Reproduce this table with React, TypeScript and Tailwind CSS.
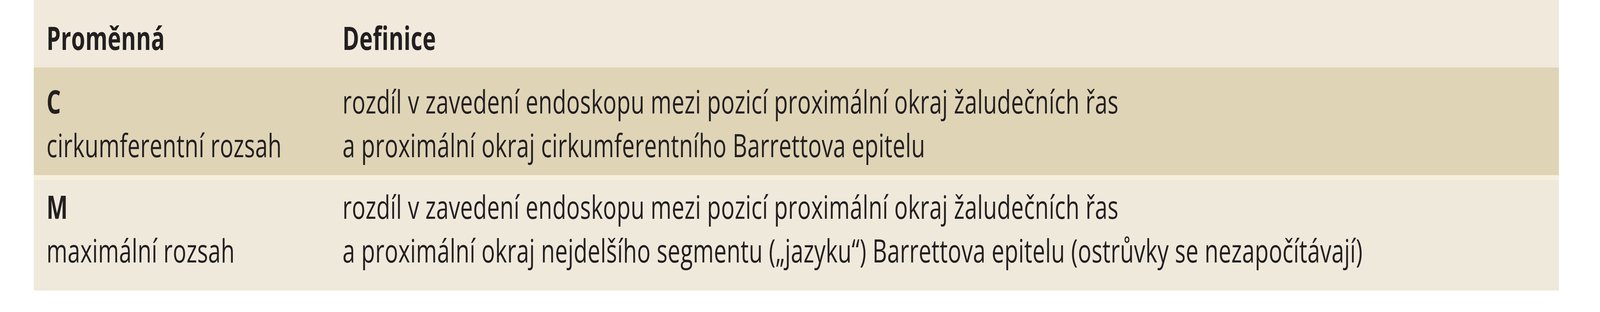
import { useEffect, useState } from "react";

// the reference is laid out on a 5881px wide sheet; fit it to whatever width the window really has
const SHEET_WIDTH = 5881;

const rows = [
  {
    code: "C",
    name: "cirkumferentní rozsah",
    bg: "bg-[#dfd4b6]",
    pad: "pt-[30px] pb-[22px]",
    lines: [
      "rozdíl v zavedení endoskopu mezi pozicí proximální okraj žaludečních řas",
      "a proximální okraj cirkumferentního Barrettova epitelu",
    ],
  },
  {
    code: "M",
    name: "maximální rozsah",
    bg: "bg-[#efe9dc]",
    pad: "pt-[11px] pb-[48px]",
    lines: [
      "rozdíl v zavedení endoskopu mezi pozicí proximální okraj žaludečních řas",
      "a proximální okraj nejdelšího segmentu („jazyku“) Barrettova epitelu (ostrůvky se nezapočítávají)",
    ],
  },
];

export default function App() {
  const [scale, setScale] = useState(() =>
    typeof window === "undefined" ? 1 : Math.min(1, window.innerWidth / SHEET_WIDTH)
  );

  useEffect(() => {
    const onResize = () => setScale(Math.min(1, window.innerWidth / SHEET_WIDTH));
    window.addEventListener("resize", onResize);
    return () => window.removeEventListener("resize", onResize);
  }, []);

  return (
    <div className="min-h-[800px] w-screen overflow-hidden bg-white">
      <div className="w-[5881px] origin-top-left" style={{ transform: `scaleX(${scale})` }}>
        <div
          className="ml-[124px] w-[5606px] text-[83px] leading-[112px] tracking-[0.5px] text-[#231f20]"
          style={{ fontFamily: '"Open Sans", "Noto Sans", sans-serif' }}
        >
          {/* Header */}
          <div className="flex bg-[#f0e9dc] pl-[47px] pt-[40px] pb-[21px] font-bold">
            <div className="w-[1088px] shrink-0">Proměnná</div>
            <div>Definice</div>
          </div>

          {rows.map((row, i) => (
            <div key={row.code}>
              {i > 0 && <div className="h-[13px] bg-[#f5f0de]" />}
              <div className={`flex pl-[47px] ${row.bg} ${row.pad}`}>
                <div className="w-[1088px] shrink-0">
                  <div className="font-bold">{row.code}</div>
                  <div>{row.name}</div>
                </div>
                <div>
                  {row.lines.map((l) => (
                    <div key={l} className="whitespace-nowrap">
                      {l}
                    </div>
                  ))}
                </div>
              </div>
            </div>
          ))}
        </div>
      </div>
    </div>
  );
}
